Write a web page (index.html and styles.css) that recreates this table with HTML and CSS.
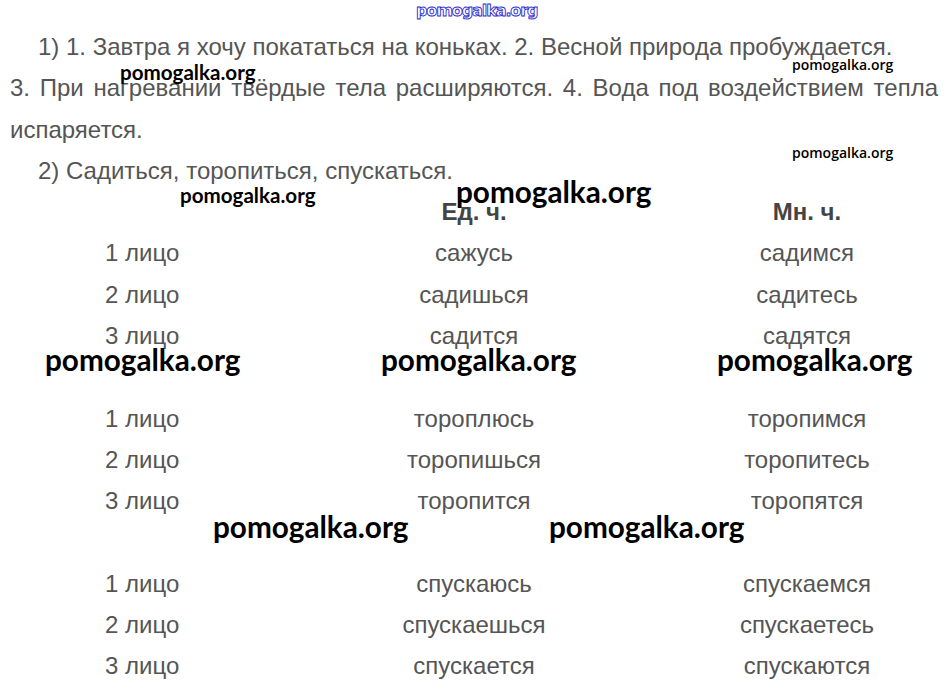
FILE: index.html
```html
<!DOCTYPE html>
<html lang="ru">
<head>
<meta charset="utf-8">
<link rel="stylesheet" href="styles.css">
</head>
<body>
<div class="page">
  <p class="para">1) 1. Завтра я хочу покататься на коньках. 2. Весной природа пробуждается.<br>3. При нагревании твёрдые тела расширяются. 4. Вода под воздействием тепла испаряется.</p>
  <p class="para">2) Садиться, торопиться, спускаться.</p>
  <div class="table">
    <div class="cell label"></div><div class="cell head">Ед. ч.</div><div class="cell head">Мн. ч.</div>
    <div class="cell label">1 лицо</div><div class="cell">сажусь</div><div class="cell">садимся</div>
    <div class="cell label">2 лицо</div><div class="cell">садишься</div><div class="cell">садитесь</div>
    <div class="cell label">3 лицо</div><div class="cell">садится</div><div class="cell">садятся</div>
    <div class="gap"></div>
    <div class="cell label">1 лицо</div><div class="cell">тороплюсь</div><div class="cell">торопимся</div>
    <div class="cell label">2 лицо</div><div class="cell">торопишься</div><div class="cell">торопитесь</div>
    <div class="cell label">3 лицо</div><div class="cell">торопится</div><div class="cell">торопятся</div>
    <div class="gap"></div>
    <div class="cell label">1 лицо</div><div class="cell">спускаюсь</div><div class="cell">спускаемся</div>
    <div class="cell label">2 лицо</div><div class="cell">спускаешься</div><div class="cell">спускаетесь</div>
    <div class="cell label">3 лицо</div><div class="cell">спускается</div><div class="cell">спускаются</div>
  </div>
</div>
<div class="wm wm-top">pomogalka.org</div>
<div class="wm wm-m wm-1">pomogalka.org</div>
<div class="wm wm-s wm-2">pomogalka.org</div>
<div class="wm wm-s wm-3">pomogalka.org</div>
<div class="wm wm-m wm-4">pomogalka.org</div>
<div class="wm wm-l wm-5">pomogalka.org</div>
<div class="wm wm-l wm-6">pomogalka.org</div>
<div class="wm wm-l wm-7">pomogalka.org</div>
<div class="wm wm-l wm-8">pomogalka.org</div>
<div class="wm wm-l wm-9">pomogalka.org</div>
<div class="wm wm-l wm-10">pomogalka.org</div>
</body>
</html>
```
FILE: styles.css
```css
html, body {
  margin: 0;
  padding: 0;
  background: #fff;
}
body {
  width: 944px;
  height: 690px;
  overflow: hidden;
  position: relative;
}
.page {
  padding: 26px 6px 0 10px;
  font-family: "Liberation Sans", Arial, sans-serif;
  font-size: 24px;
  line-height: 41.3px;
  color: #555;
}
.para {
  margin: 0;
  text-align: justify;
  text-indent: 28px;
}
.table {
  display: grid;
  grid-template-columns: 282px 384px 282px;
  margin-left: -10px;
  width: 944px;
}
.table .cell {
  text-align: center;
  height: 41.3px;
  white-space: nowrap;
}
.table .label {
  text-align: left;
  padding-left: 105px;
}
.table .head {
  font-weight: bold;
  color: #444;
}
.gap {
  grid-column: 1 / -1;
  height: 41.3px;
}
.wm {
  position: absolute;
  font-family: Lato, "Open Sans", sans-serif;
  font-weight: bold;
  color: #000;
  white-space: nowrap;
  line-height: 1;
}
.wm-top {
  left: 416px;
  top: 3px;
  font-family: "DejaVu Sans", sans-serif;
  font-weight: bold;
  font-size: 16px;
  letter-spacing: -1.1px;
  color: #fff;
  -webkit-text-stroke: 0.9px #2b2bcc;
}
.wm-l { font-size: 29.7px; }
.wm-m { font-size: 20.6px; }
.wm-s { font-size: 14px; font-family: "Open Sans", sans-serif; font-weight: 600; }
.wm-1 { left: 120px; top: 62px; }
.wm-2 { left: 792px; top: 58px; }
.wm-3 { left: 792px; top: 146px; }
.wm-4 { left: 180px; top: 185px; }
.wm-5 { left: 456px; top: 177px; }
.wm-6 { left: 45px; top: 345px; }
.wm-7 { left: 381px; top: 345px; }
.wm-8 { left: 717px; top: 345px; }
.wm-9 { left: 213px; top: 512px; }
.wm-10 { left: 549px; top: 512px; }
```
